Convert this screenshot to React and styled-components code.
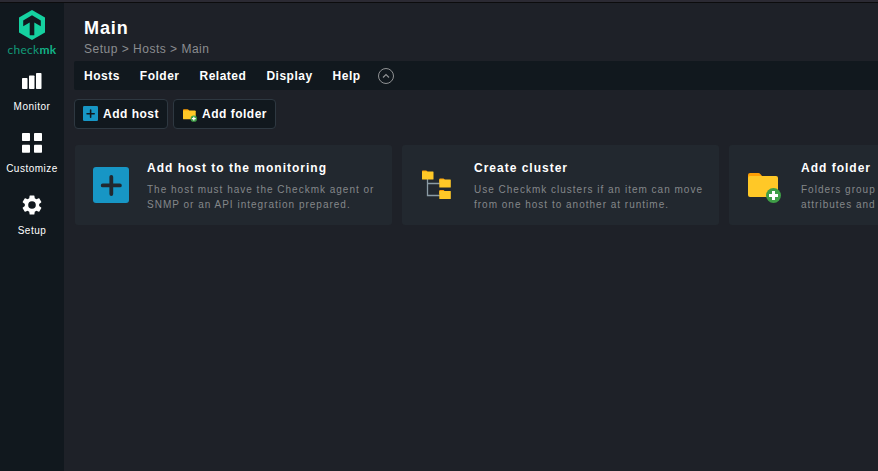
import React from 'react';
import styled, { createGlobalStyle } from 'styled-components';

const GlobalStyle = createGlobalStyle`
  * { box-sizing: border-box; }
  html, body { margin: 0; height: 100%; overflow: hidden; background: #1e2128; }
  body { font-family: "Liberation Sans", Arial, sans-serif; color: #fff; }
  svg { display: block; flex: none; }
`;

const Page = styled.div`
  display: flex;
  width: 100vw;
  height: 100vh;
  overflow: hidden;
  border-top: 2px solid #2b2a33;
  box-shadow: inset 0 1px #0c0c0d;
`;

const Sidebar = styled.nav`
  display: flex;
  flex: none;
  flex-direction: column;
  align-items: center;
  width: 64px;
  padding-top: 7px;
  margin-top: 1px;
  background: #11181e;
`;

const Brand = styled.div`
  display: flex;
  flex-direction: column;
  align-items: center;
  height: 61px;
`;

const BrandName = styled.div`
  font: 12px/15px Lato, sans-serif;
  letter-spacing: 0.3px;
  color: #129b78;
  b { font-weight: 700; color: #12b286; }
`;

const NavItem = styled.a`
  display: flex;
  flex-direction: column;
  align-items: center;
  gap: 10px;
  height: 62px;
  font-size: 10px;
  line-height: 12px;
  letter-spacing: 0.5px;
  white-space: nowrap;
`;

const Content = styled.main`
  flex: 1;
  min-width: 0;
  padding: 16px 0 0 10px;
`;

const Header = styled.header`
  padding-left: 10px;
`;

const Title = styled.h1`
  margin: 0;
  font-size: 18px;
  line-height: 21px;
  letter-spacing: 0.9px;
`;

const Breadcrumb = styled.div`
  margin-top: 3px;
  font-size: 12px;
  line-height: 14px;
  letter-spacing: 0.5px;
  color: #8b8d90;
`;

const MenuBar = styled.div`
  display: flex;
  align-items: center;
  gap: 20px;
  height: 29px;
  margin-top: 5px;
  padding-left: 10px;
  border-radius: 2px 0 0 2px;
  background: #11181e;
`;

const MenuItem = styled.span`
  font-size: 12px;
  font-weight: 700;
  line-height: 14px;
  letter-spacing: 0.5px;
`;

const CollapseButton = styled.span`
  margin-left: -3px;
`;

const Actions = styled.div`
  display: flex;
  gap: 5px;
  margin-top: 9px;
`;

const ActionButton = styled.button`
  display: flex;
  align-items: center;
  gap: 5px;
  width: ${(p) => p.$width}px;
  height: 30px;
  padding: 0 0 0 8px;
  border: 1px solid #2e3841;
  border-radius: 4px;
  background: #11181e;
  color: #fff;
  font: 700 12px/14px "Liberation Sans", Arial, sans-serif;
  letter-spacing: 0.5px;
  white-space: nowrap;
`;

const ActionIcon = styled.span`
  display: flex;
  justify-content: flex-end;
  width: 15px;
  height: 16px;
  align-items: ${(p) => p.$align || 'flex-start'};
`;

const Cards = styled.div`
  display: grid;
  grid-template-columns: repeat(3, 317px);
  gap: 10px;
  margin: 16px 0 0 1px;
`;

const Card = styled.section`
  display: flex;
  height: 80px;
  border-radius: 3px;
  background: #22282f;
`;

const CardIcon = styled.div`
  display: flex;
  flex: none;
  align-items: center;
  justify-content: center;
  width: 72px;
  padding: ${(p) => p.$nudge || '0'};
`;

const CardBody = styled.div`
  padding-top: 16px;
  white-space: nowrap;
`;

const CardTitle = styled.h2`
  margin: 0;
  font-size: 12px;
  line-height: 14px;
  letter-spacing: 1px;
`;

const CardText = styled.p`
  margin: 7px 0 0;
  font-size: 10px;
  line-height: 15px;
  letter-spacing: 1px;
  color: #84878a;
`;

const Logo = () => (
  <svg width="28" height="32" viewBox="0 0 28 32">
    <path fill="#15d1a0" d="M14 0 27 7.500v15L14 30 1 22.500v-15z" />
    <path fill="#11181e" d="M14 5.300 22.800 10.400v5.800L16.300 12.600v12.700h-4.600V12.600L5.200 16.200v-5.800z" />
  </svg>
);

const MonitorIcon = () => (
  <svg width="20" height="20" viewBox="0 0 20 20" fill="#fff">
    <rect x="0" y="7" width="5.5" height="11" rx=".7" />
    <rect x="7" y="4.500" width="5.5" height="13.500" rx=".7" />
    <rect x="14" y="2" width="5.5" height="16" rx=".7" />
  </svg>
);

const CustomizeIcon = () => (
  <svg width="20" height="20" viewBox="0 0 20 20" fill="#fff">
    <rect x="0" y="0" width="8" height="8" rx=".7" />
    <rect x="12" y="0" width="8" height="8" rx=".7" />
    <rect x="0" y="11.800" width="8" height="8" rx=".7" />
    <rect x="12" y="11.800" width="8" height="8" rx=".7" />
  </svg>
);

const SetupIcon = () => (
  <svg width="20" height="20" viewBox="2 2 20 20" fill="#fff">
    <path d="M19.14 12.94c.04-.3.06-.61.06-.94 0-.32-.02-.64-.07-.94l2.03-1.58a.49.49 0 0 0 .12-.61l-1.92-3.32a.49.49 0 0 0-.59-.22l-2.39.96c-.5-.38-1.03-.7-1.62-.94l-.36-2.54a.48.48 0 0 0-.48-.41h-3.84a.48.48 0 0 0-.47.41l-.36 2.54c-.59.24-1.13.57-1.62.94l-2.39-.96a.48.48 0 0 0-.59.22L2.74 8.87a.48.48 0 0 0 .12.61l2.03 1.58c-.05.3-.09.63-.09.94s.02.64.07.94l-2.03 1.58a.49.49 0 0 0-.12.61l1.92 3.32c.12.22.37.29.59.22l2.39-.96c.5.38 1.03.7 1.62.94l.36 2.54c.05.24.24.41.48.41h3.84c.24 0 .44-.17.47-.41l.36-2.54c.59-.24 1.13-.56 1.62-.94l2.39.96c.22.08.47 0 .59-.22l1.92-3.32a.48.48 0 0 0-.12-.61zM12 15.8a3.8 3.8 0 1 1 0-7.6 3.8 3.8 0 0 1 0 7.6z" />
  </svg>
);

const CollapseIcon = () => (
  <svg width="17" height="17" viewBox="0 0 17 17" fill="none" stroke="#909294">
    <circle cx="8" cy="9" r="7.5" />
    <path d="M5 10.500 8 7.500l3 3" strokeWidth="1.2" />
  </svg>
);

const HostIcon = ({ size, hole }) => (
  <svg width={size} height={size} viewBox="0 0 36 36">
    <rect width="36" height="36" rx="3" fill="#1796c5" />
    <path d="M18.300 9.8v17.200M9.700 18.400h17.200" stroke={hole} strokeWidth="3.800" strokeLinecap="round" />
  </svg>
);

const FolderAddIcon = ({ width, height }) => (
  <svg width={width} height={height} viewBox="0 0 33 30">
    <path d="M0 12V2Q0 0 2 0h8.500q1 0 1.800 1l2.200 2.500V12z" fill="#ff9f05" />
    <rect y="3" width="30" height="21" rx="2" fill="#ffc827" />
    <circle cx="25.500" cy="22.500" r="7.500" fill="#3f9e47" />
    <path d="M25.500 18v9M21 22.500h9" stroke="#fff" strokeWidth="3" />
  </svg>
);

const FolderGlyph = ({ x, y }) => (
  <g transform={`translate(${x} ${y})`}>
    <path d="M0 4V.7Q0 0 .7 0h3.600L6 1.700V4z" fill="#ff9f05" />
    <rect y="1" width="11.500" height="8" rx=".5" fill="#ffc827" />
  </g>
);

const ClusterIcon = () => (
  <svg width="30" height="30" viewBox="0 0 30 30">
    <path d="M5.500 9v16.500H18M5.500 13.500H18" fill="none" stroke="#8b9ba5" strokeWidth="1.300" />
    <FolderGlyph x={0} y={0.500} />
    <FolderGlyph x={17.300} y={8.500} />
    <FolderGlyph x={17.300} y={20} />
  </svg>
);

const cards = [
  { icon: <HostIcon size={36} hole="#22282f" />, title: 'Add host to the monitoring', lines: ['The host must have the Checkmk agent or', 'SNMP or an API integration prepared.'] },
  { icon: <ClusterIcon />, nudge: '0 2.5px 0 0', title: 'Create cluster', lines: ['Use Checkmk clusters if an item can move', 'from one host to another at runtime.'] },
  { icon: <FolderAddIcon width={33} height={30} />, nudge: '6px 1px 0 0', title: 'Add folder', lines: ['Folders group', 'attributes and'] },
];

export default function App() {
  return (
    <>
      <GlobalStyle />
      <Page>
        <Sidebar>
          <Brand>
            <Logo />
            <BrandName>check<b>mk</b></BrandName>
          </Brand>
          <NavItem><MonitorIcon />Monitor</NavItem>
          <NavItem><CustomizeIcon />Customize</NavItem>
          <NavItem><SetupIcon />Setup</NavItem>
        </Sidebar>
        <Content>
          <Header>
            <Title>Main</Title>
            <Breadcrumb>Setup &gt; Hosts &gt; Main</Breadcrumb>
          </Header>
          <MenuBar>
            {['Hosts', 'Folder', 'Related', 'Display', 'Help'].map((name) => (
              <MenuItem key={name}>{name}</MenuItem>
            ))}
            <CollapseButton><CollapseIcon /></CollapseButton>
          </MenuBar>
          <Actions>
            <ActionButton $width={94}>
              <ActionIcon><HostIcon size={15} hole="#11181e" /></ActionIcon>Add host
            </ActionButton>
            <ActionButton $width={103}>
              <ActionIcon $align="flex-end"><FolderAddIcon width={14} height={13} /></ActionIcon>Add folder
            </ActionButton>
          </Actions>
          <Cards>
            {cards.map((card) => (
              <Card key={card.title}>
                <CardIcon $nudge={card.nudge}>{card.icon}</CardIcon>
                <CardBody>
                  <CardTitle>{card.title}</CardTitle>
                  <CardText>{card.lines[0]}<br />{card.lines[1]}</CardText>
                </CardBody>
              </Card>
            ))}
          </Cards>
        </Content>
      </Page>
    </>
  );
}
